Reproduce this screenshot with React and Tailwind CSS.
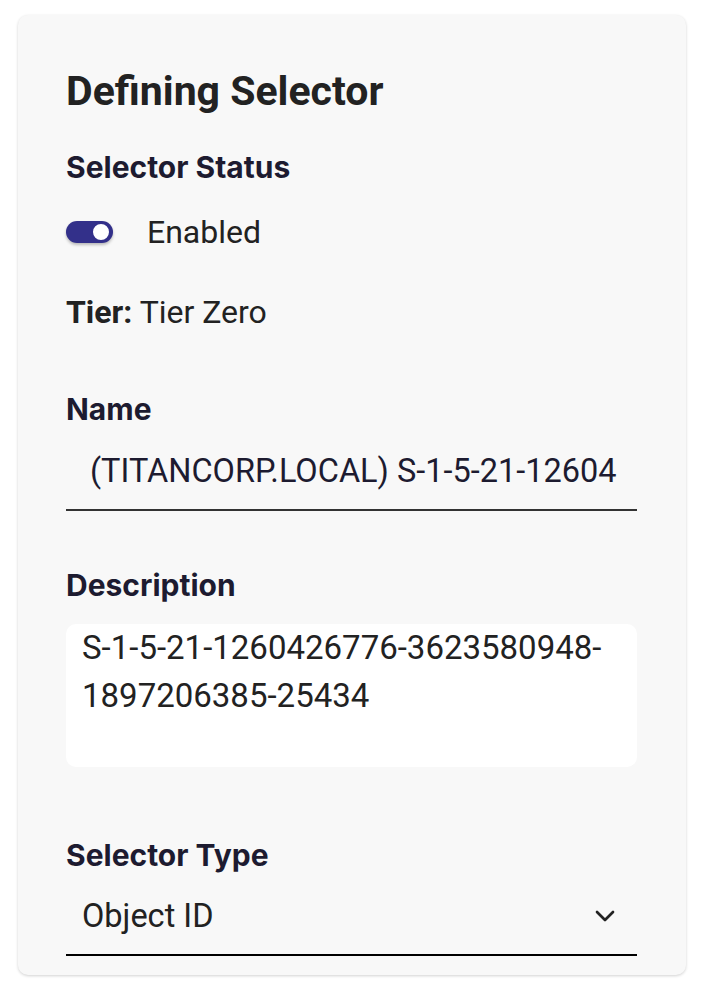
import { ChevronDown } from "lucide-react";

const roboto = { fontFamily: "Roboto, 'Liberation Sans', sans-serif" };

function Label({ children, className = "" }) {
  return (
    <h3
      className={`font-['Inter',sans-serif] text-[30px] leading-[36px] font-bold text-[#1d1b30] ${className}`}
    >
      {children}
    </h3>
  );
}

export default function App() {
  return (
    <div className="min-h-screen bg-white pt-[15px] px-[18px]" style={roboto}>
      <div className="w-[668px] rounded-[10px] bg-[#f8f8f8] shadow-[0_1px_3px_rgba(0,0,0,0.18)] pl-[48px] pr-[49px] pt-[52px] pb-[19px]">
        {/* Header */}
        <h2 className="text-[41px] leading-[48px] font-bold text-[#222]">Defining Selector</h2>

        {/* Status */}
        <Label className="mt-[34px]">Selector Status</Label>
        <div className="mt-[27px] flex h-[40px] items-center">
          <div className="relative h-[22px] w-[47px] rounded-full bg-[#33308a] shadow-[0_2px_3px_rgba(0,0,0,0.25)]">
            <div className="absolute right-[2px] top-[1px] h-[20px] w-[20px] rounded-full border-2 border-[#33308a] bg-white" />
          </div>
          <span className="ml-[34px] text-[32px] leading-[40px] text-[#222]">Enabled</span>
        </div>

        <p className="mt-[40px] text-[32px] leading-[40px] text-[#222]">
          <span className="font-bold">Tier:</span> Tier Zero
        </p>

        {/* Name */}
        <Label className="mt-[59px]">Name</Label>
        <div className="mt-[24px] border-b-2 border-[#333] pb-[18px] pl-[24px]">
          <div className="h-[40px] overflow-hidden whitespace-nowrap text-[32.5px] leading-[40px] text-[#1d1b30]">
            (TITANCORP.LOCAL) S-1-5-21-12604
          </div>
        </div>

        {/* Description */}
        <Label className="mt-[56px]">Description</Label>
        <div className="mt-[21px] h-[143px] rounded-[10px] bg-white px-[16px] text-[33px] leading-[48px] text-[#222]">
          S-1-5-21-1260426776-3623580948-1897206385-25434
        </div>

        {/* Type */}
        <Label className="mt-[70px]">Selector Type</Label>
        <div className="mt-[23px] flex items-center justify-between border-b-2 border-black pb-[18px] pl-[16px] pr-[16px]">
          <span className="text-[32.5px] leading-[40px] text-[#222]">Object ID</span>
          <ChevronDown size={32} strokeWidth={2} className="text-[#222]" />
        </div>
      </div>
    </div>
  );
}
